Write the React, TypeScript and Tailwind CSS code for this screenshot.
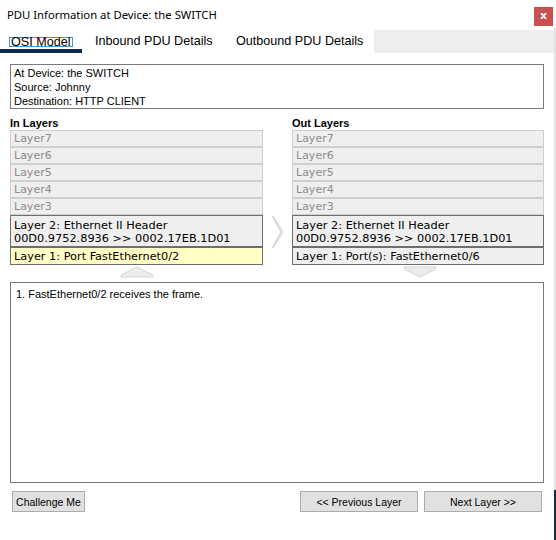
import React from "react";

const SANS = "font-['Liberation_Sans',Arial,sans-serif]";
const LAYER_FONT = "font-['DejaVu_Sans',Verdana,sans-serif]";

const UPPER_LAYERS = ["Layer7", "Layer6", "Layer5", "Layer4", "Layer3"];

function DimLayer({ label }: { label: string }) {
  return (
    <div className="h-[17px] border border-[#cfcfcf] bg-[#efefef] pl-[3px] pt-[1px] text-[11px] leading-[14px] text-[#8c8c8c]">
      {label}
    </div>
  );
}

function LayerColumn({
  title,
  layer1,
  highlight,
}: {
  title: string;
  layer1: string;
  highlight: boolean;
}) {
  return (
    <div className="flex flex-col">
      <div className={`${SANS} h-[14px] text-[11px] font-bold leading-[14px] text-black`}>{title}</div>
      <div className={`${LAYER_FONT} flex flex-col`}>
        {UPPER_LAYERS.map((label) => (
          <DimLayer key={label} label={label} />
        ))}
        <div className="h-[32px] border border-[#6e6e6e] bg-[#efefef] pl-[3px] pt-[3px] text-[11.3px] leading-[13px] text-black">
          <div>Layer 2: Ethernet II Header</div>
          <div>00D0.9752.8936 &gt;&gt; 0002.17EB.1D01</div>
        </div>
        <div
          className={`h-[18px] border border-[#6e6e6e] pl-[3px] pt-[2px] text-[11.3px] leading-[14px] text-black ${
            highlight ? "bg-[#ffffc6]" : "bg-[#efefef]"
          }`}
        >
          {layer1}
        </div>
      </div>
    </div>
  );
}

function Chevron({ dir }: { dir: "up" | "down" }) {
  const points = dir === "up" ? "1,9 17,1 33,9 33,11 1,11" : "1,1 33,1 33,3 17,11 1,3";
  return (
    <svg width="34" height="12" viewBox="0 0 34 12">
      <polygon points={points} fill="#ececec" stroke="#d6d6d6" strokeWidth="1" />
    </svg>
  );
}

export default function App() {
  return (
    <div className="flex h-[540px] w-[556px] bg-white text-black">
      <div className="flex w-[554px] flex-col">
        {/* title bar */}
        <div className="flex h-[30px] items-start justify-between">
          <div className="pl-[7px] pt-[6px] font-['Segoe_UI','Noto_Sans',sans-serif] text-[11.3px] leading-[17px]">
            PDU Information at Device: the SWITCH
          </div>
          <div className="mr-[1px] mt-[7px] flex h-[19px] w-[19px] items-center justify-center bg-[#c75050] pb-[2px] font-['DejaVu_Sans',sans-serif] text-[11px] font-bold leading-none text-white">
            x
          </div>
        </div>

        {/* tabs */}
        <div className={`flex h-[23px] ${SANS} text-[12.6px]`}>
          <div className="relative flex w-[82px] items-start pl-[9px] pt-[7px]">
            <span className="flex h-[10px] items-center border border-[#3a9ad6] px-[1px] leading-[10px]">
              OSI Model
            </span>
            <div className="absolute bottom-0 left-0 h-[4px] w-[82px] bg-[#0f2a4c]" />
          </div>
          <div className="w-[142px] pl-[13px] pt-[3px] leading-[16px]">Inbound PDU Details</div>
          <div className="w-[150px] pl-[12px] pt-[3px] leading-[16px]">Outbound PDU Details</div>
          <div className="flex-1 bg-[#eeeeee]" />
        </div>

        {/* content */}
        <div className="flex flex-col px-[10px]">
          <div className={`${SANS} mt-[11px] h-[45px] border border-[#7a7a7a] pl-[3px] pt-[1px] text-[11px] leading-[14px]`}>
            <div>At Device: the SWITCH</div>
            <div>Source: Johnny</div>
            <div>Destination: HTTP CLIENT</div>
          </div>

          <div className="mt-[7px] flex">
            <div className="w-[253px]">
              <LayerColumn title="In Layers" layer1="Layer 1: Port FastEthernet0/2" highlight />
              <div className="flex h-[17px] justify-center pt-[1px]">
                <Chevron dir="up" />
              </div>
            </div>
            <div className="flex w-[29px] items-start justify-center pt-[99px]">
              <svg width="12" height="34" viewBox="0 0 12 34">
                <polygon points="1,1 11,17 1,33 1,31 9,17 1,3" fill="#ececec" stroke="#d0d0d0" strokeWidth="1" />
              </svg>
            </div>
            <div className="w-[252px]">
              <LayerColumn title="Out Layers" layer1="Layer 1: Port(s): FastEthernet0/6" highlight={false} />
              <div className="flex h-[17px] justify-center pl-[4px] pt-[1px]">
                <Chevron dir="down" />
              </div>
            </div>
          </div>

          <div className={`${SANS} h-[201px] border border-[#7a7a7a] pl-[5px] pt-[4px] text-[11px] leading-[14px]`}>
            1. FastEthernet0/2 receives the frame.
          </div>

          <div className={`${SANS} mt-[8px] flex items-center text-[10.5px]`}>
            <button className="ml-[2px] h-[21px] w-[73px] border border-[#adadad] bg-[#e1e1e1] pt-[1px] leading-[19px]">
              Challenge Me
            </button>
            <div className="flex-1" />
            <button className="h-[21px] w-[118px] border border-[#adadad] bg-[#e1e1e1] pt-[1px] leading-[19px]">
              &lt;&lt; Previous Layer
            </button>
            <button className="ml-[6px] mr-[2px] h-[21px] w-[118px] border border-[#adadad] bg-[#e1e1e1] pt-[1px] leading-[19px]">
              Next Layer &gt;&gt;
            </button>
          </div>
        </div>
      </div>

      {/* neighbouring window edge */}
      <div className="flex w-[2px] flex-col">
        <div className="h-[28px] bg-white" />
        <div className="flex-1 bg-[#e2e2e2]" />
        <div className="h-[50px] bg-[#1e2b3c]" />
      </div>
    </div>
  );
}
